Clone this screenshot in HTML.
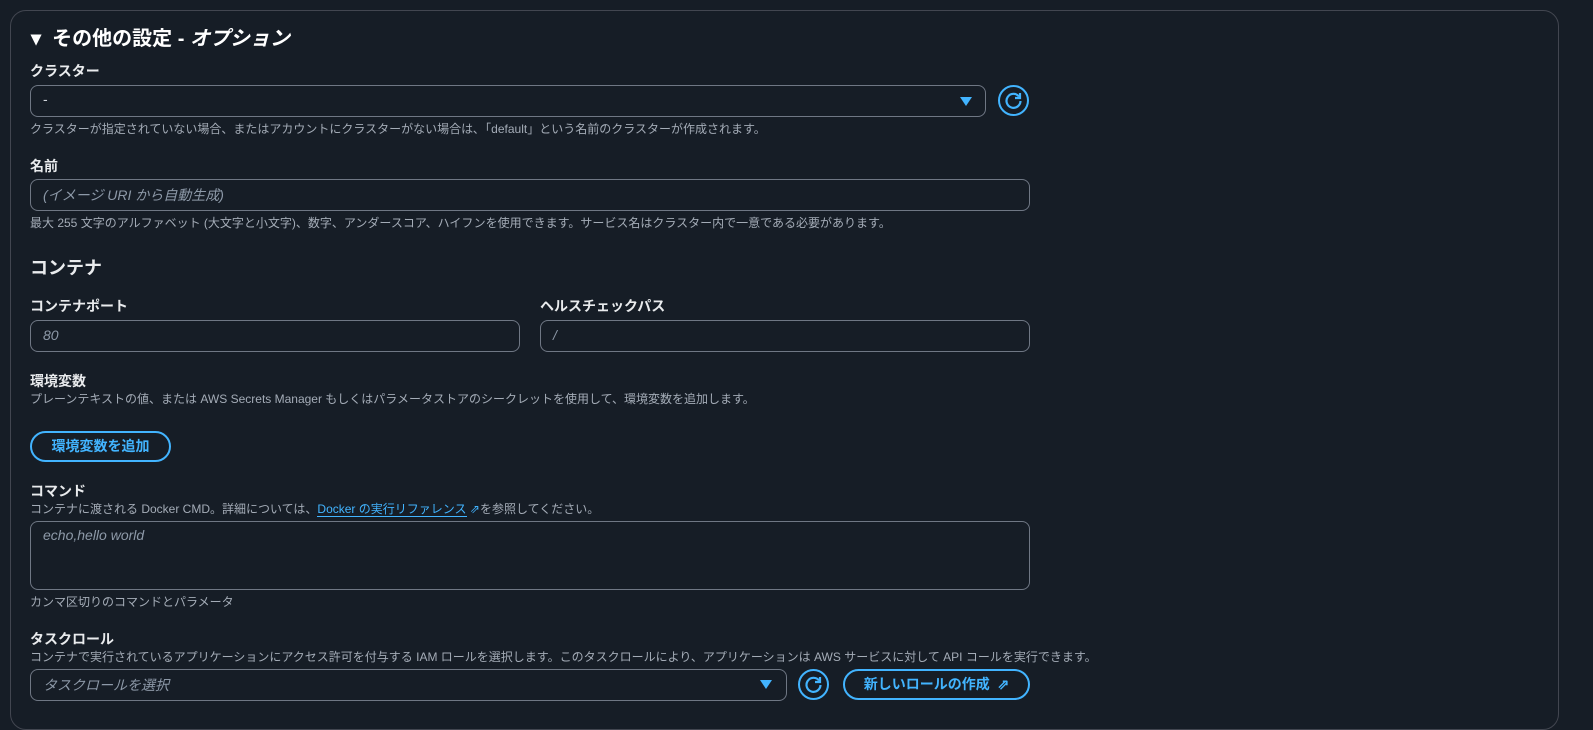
<!DOCTYPE html>
<html><head><meta charset="utf-8"><style>
*{box-sizing:border-box;margin:0;padding:0}
body{width:1593px;height:705px;overflow:hidden;background:#161d26;font-family:"Liberation Sans","Noto Sans CJK JP",sans-serif;color:#d1d5db;position:relative}
.panel{position:absolute;left:10px;top:10px;width:1549px;height:720px;border:1px solid #424650;border-radius:16px;background:#161d26}
.a{position:absolute;white-space:nowrap}
.lbl{font-size:14px;font-weight:bold;color:#e9ebed}
.help{font-size:12px;color:#a4acb7}
.box{position:absolute;border:1px solid #6f7784;border-radius:8px;background:#161d26}
.ph{font-size:14px;font-style:italic;color:#8d99a8}
.tri{position:absolute;width:0;height:0;border-left:6px solid transparent;border-right:6px solid transparent;border-top:9px solid #42b4ff}
.circ{position:absolute;width:31px;height:31px;border:2px solid #42b4ff;border-radius:50%}
.btn{position:absolute;border:2px solid #42b4ff;border-radius:16px;color:#42b4ff;font-weight:bold;font-size:14px;text-align:center;line-height:27px}
</style></head><body>
<div class="panel"></div>
<div class="a" style="left:31px;top:22px;font-size:20px;font-weight:bold;color:#fff">▾&nbsp;&nbsp;その他の設定 - <i>オプション</i></div>
<div class="a lbl" style="left:30px;top:61px">クラスター</div>
<div class="box" style="left:30px;top:85px;width:956px;height:32px"></div>
<div class="a" style="left:43px;top:91px;font-size:14px;color:#d1d5db">-</div>
<div class="tri" style="left:960px;top:97px"></div>
<div class="circ" style="left:998px;top:85px"><svg width="27" height="27" viewBox="0 0 27 27"><path d="M19 9.5A7 7 0 1 0 20.5 14" fill="none" stroke="#42b4ff" stroke-width="2.2"/><path d="M20 6v5h-5" fill="none" stroke="#42b4ff" stroke-width="2.2"/></svg></div>
<div class="a help" style="left:30px;top:120px">クラスターが指定されていない場合、またはアカウントにクラスターがない場合は､「default」という名前のクラスターが作成されます。</div>
<div class="a lbl" style="left:30px;top:156px">名前</div>
<div class="box" style="left:30px;top:179px;width:1000px;height:32px"></div>
<div class="a ph" style="left:43px;top:185px">(イメージ URI から自動生成)</div>
<div class="a help" style="left:30px;top:214px">最大 255 文字のアルファベット (大文字と小文字)、数字、アンダースコア、ハイフンを使用できます。サービス名はクラスター内で一意である必要があります。</div>
<div class="a" style="left:30px;top:254px;font-size:18px;font-weight:bold;color:#e9ebed">コンテナ</div>
<div class="a lbl" style="left:30px;top:296px">コンテナポート</div>
<div class="a lbl" style="left:540px;top:296px">ヘルスチェックパス</div>
<div class="box" style="left:30px;top:320px;width:490px;height:32px"></div>
<div class="box" style="left:540px;top:320px;width:490px;height:32px"></div>
<div class="a ph" style="left:43px;top:327px">80</div>
<div class="a ph" style="left:553px;top:327px">/</div>
<div class="a lbl" style="left:30px;top:371px">環境変数</div>
<div class="a help" style="left:30px;top:390px">プレーンテキストの値、または AWS Secrets Manager もしくはパラメータストアのシークレットを使用して、環境変数を追加します。</div>
<div class="btn" style="left:30px;top:431px;width:141px;height:31px">環境変数を追加</div>
<div class="a lbl" style="left:30px;top:481px">コマンド</div>
<div class="a help" style="left:30px;top:500px">コンテナに渡される Docker CMD。詳細については、<span style="color:#42b4ff;border-bottom:1px solid #42b4ff">Docker の実行リファレンス</span> <span style="color:#42b4ff">⇗</span>を参照してください。</div>
<div class="box" style="left:30px;top:521px;width:1000px;height:69px"></div>
<div class="a ph" style="left:43px;top:527px">echo,hello world</div>
<div class="a help" style="left:30px;top:593px">カンマ区切りのコマンドとパラメータ</div>
<div class="a lbl" style="left:30px;top:629px">タスクロール</div>
<div class="a help" style="left:30px;top:648px">コンテナで実行されているアプリケーションにアクセス許可を付与する IAM ロールを選択します。このタスクロールにより、アプリケーションは AWS サービスに対して API コールを実行できます。</div>
<div class="box" style="left:30px;top:669px;width:757px;height:32px"></div>
<div class="a ph" style="left:43px;top:675px">タスクロールを選択</div>
<div class="tri" style="left:760px;top:680px"></div>
<div class="circ" style="left:798px;top:669px"><svg width="27" height="27" viewBox="0 0 27 27"><path d="M19 9.5A7 7 0 1 0 20.5 14" fill="none" stroke="#42b4ff" stroke-width="2.2"/><path d="M20 6v5h-5" fill="none" stroke="#42b4ff" stroke-width="2.2"/></svg></div>
<div class="btn" style="left:843px;top:669px;width:187px;height:31px">新しいロールの作成 &nbsp;⇗</div>
</body></html>
